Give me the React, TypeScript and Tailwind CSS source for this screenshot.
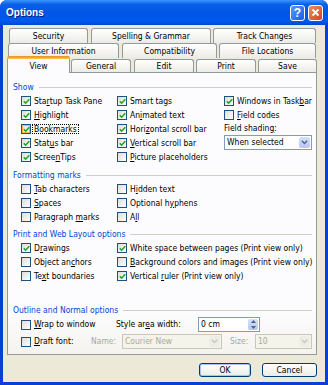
import React from "react";

const font = "font-['DejaVu_Sans_Condensed','Liberation_Sans',sans-serif]";

function L({ t }: { t: string }) {
  const i = t.indexOf("&");
  if (i < 0) return <>{t}</>;
  return (
    <>
      {t.slice(0, i)}
      <u>{t[i + 1]}</u>
      {t.slice(i + 2)}
    </>
  );
}

function Box({ on, hot }: { on?: boolean; hot?: boolean }) {
  return (
    <span className="relative inline-flex h-[10px] w-[10px] shrink-0 items-center justify-center border border-[#1c5180] bg-[linear-gradient(135deg,#dcdcd7,#ffffff)]">
      {hot && <span className="absolute inset-0 border border-[#f8b34a]" />}
      {on && (
        <svg width="7" height="7" viewBox="0 0 7 7" className="relative">
          <path d="M0.8 3.2 L2.6 5.2 L6.3 1.2" fill="none" stroke="#21a121" strokeWidth="1.5" />
        </svg>
      )}
    </span>
  );
}

function Cb({ t, on, hot, focus }: { t: string; on?: boolean; hot?: boolean; focus?: boolean }) {
  return (
    <div className="flex h-[14px] items-center gap-[2px] whitespace-nowrap">
      <Box on={on} hot={hot} />
      <span className={focus ? "px-[1px] outline outline-1 outline-dotted outline-black" : "px-[1px]"}>
        <L t={t} />
      </span>
    </div>
  );
}

function Head({ t }: { t: string }) {
  return (
    <div className="flex h-[14px] items-center gap-[5px] pr-[4px] text-[#0046d5]">
      <span className="whitespace-nowrap">{t}</span>
      <span className="h-px flex-1 bg-[#d0d0bf]" />
    </div>
  );
}

function Chevron({ c }: { c: string }) {
  return (
    <svg width="7" height="5" viewBox="0 0 7 5">
      <path d="M0.8 0.8 L3.5 3.6 L6.2 0.8" fill="none" stroke={c} strokeWidth="1.4" />
    </svg>
  );
}

function Tab({ t, w, active }: { t: string; w: string; active?: boolean }) {
  if (active)
    return (
      <div className={`relative z-10 -mb-px flex h-[17px] flex-col rounded-t-[3px] border border-b-0 border-[#919b9c] bg-[#fcfcfe] ${w}`}>
        <div className="-mx-px -mt-px h-[3px] rounded-t-[3px] bg-[linear-gradient(to_bottom,#e68b2c,#ffc73c)]" />
        <div className="flex flex-1 items-center justify-center">{t}</div>
      </div>
    );
  return (
    <div className={`flex h-full items-center justify-center rounded-t-[3px] border border-b-0 border-[#919b9c] bg-[linear-gradient(to_bottom,#ffffff,#ecebe6)] ${w}`}>
      {t}
    </div>
  );
}

export default function App() {
  return (
    <div className={`flex h-[385px] w-[328px] flex-col overflow-hidden rounded-t-[7px] bg-[#0a3fd6] text-[8.5px] leading-none text-black ${font}`}>
      {/* title bar */}
      <div className="flex h-[25px] shrink-0 items-center bg-[linear-gradient(to_bottom,#3d95ff_0%,#0a5fe8_18%,#0055e6_50%,#0058ee_85%,#0046d0_100%)] pl-[6px] pr-[5px]">
        <span className="flex-1 font-['Liberation_Sans',sans-serif] text-[10px] font-bold text-white [text-shadow:1px_1px_0_#0a1e6e]">
          Options
        </span>
        <div className="flex h-[16px] w-[15px] items-center justify-center rounded-[3px] border border-white bg-[linear-gradient(135deg,#5a9aff,#1a5ae8)] font-['Liberation_Sans',sans-serif] text-[12px] font-bold text-white">
          ?
        </div>
        <div className="ml-[3px] flex h-[16px] w-[15px] items-center justify-center rounded-[3px] border border-white bg-[linear-gradient(135deg,#f28a64,#d2461a)]">
          <svg width="9" height="9" viewBox="0 0 9 9">
            <path d="M1.5 1.5 L7.5 7.5 M7.5 1.5 L1.5 7.5" stroke="#fff" strokeWidth="1.8" />
          </svg>
        </div>
      </div>

      {/* body */}
      <div className="mx-[3px] mb-[3px] flex flex-1 flex-col bg-[#ece9d8] pl-[4px] pr-[8px] pt-[3px]">
        <div className="flex h-[15px] gap-[3px] pl-[2px]">
          <Tab t="Security" w="w-[79px]" />
          <Tab t="Spelling & Grammar" w="w-[120px]" />
          <Tab t="Track Changes" w="w-[103px] -ml-px" />
        </div>
        <div className="flex h-[15px] gap-[3px] pl-[1px]">
          <Tab t="User Information" w="w-[111px]" />
          <Tab t="Compatibility" w="w-[95px]" />
          <Tab t="File Locations" w="w-[97px] -ml-px" />
        </div>
        <div className="-mt-[2px] flex h-[16px] items-end">
          <Tab t="View" w="w-[63px]" active />
          <div className="ml-px flex h-[13px] gap-[2px]">
            <Tab t="General" w="w-[60px]" />
            <Tab t="Edit" w="w-[60px] ml-px" />
            <Tab t="Print" w="w-[60px]" />
            <Tab t="Save" w="w-[59px]" />
          </div>
        </div>

        {/* panel */}
        <div className="flex h-[283px] w-[310px] flex-col border border-[#919b9c] bg-[linear-gradient(to_bottom,#fcfcfe_85%,#f4f3ee)] pl-[5px] pt-[7px]">
          <Head t="Show" />
          <div className="flex pl-[8px]">
            <div className="w-[96px]">
              <Cb t="Sta&rtup Task Pane" on />
              <Cb t="&Highlight" on />
              <Cb t="Boo&kmarks" on hot focus />
              <Cb t="Stat&us bar" on />
              <Cb t="Scree&nTips" on />
            </div>
            <div className="w-[107px]">
              <Cb t="Smart ta&gs" on />
              <Cb t="An&imated text" on />
              <Cb t="Hori&zontal scroll bar" on />
              <Cb t="&Vertical scroll bar" on />
              <Cb t="&Picture placeholders" />
            </div>
            <div className="flex flex-col">
              <Cb t="Windows in Task&bar" on />
              <Cb t="&Field codes" />
              <div className="flex h-[12px] items-center">
                <L t="Field shadin&g:" />
              </div>
              <div className="mt-px flex h-[15px] w-[88px] items-center border border-[#7f9db9] bg-white pl-[2px]">
                <span className="flex-1">When selected</span>
                <span className="m-px flex h-[11px] w-[11px] items-center justify-center rounded-[2px] bg-[linear-gradient(to_bottom,#d4e1fc,#b4c8f6)]">
                  <Chevron c="#4d6185" />
                </span>
              </div>
            </div>
          </div>

          <div className="mt-[4px]">
            <Head t="Formatting marks" />
          </div>
          <div className="flex pl-[8px]">
            <div className="w-[96px]">
              <Cb t="&Tab characters" />
              <Cb t="&Spaces" />
              <Cb t="Paragraph &marks" />
            </div>
            <div>
              <Cb t="H&idden text" />
              <Cb t="Optional h&yphens" />
              <Cb t="A&ll" />
            </div>
          </div>

          <div className="mt-[3px]">
            <Head t="Print and Web Layout options" />
          </div>
          <div className="flex pl-[8px]">
            <div className="w-[96px]">
              <Cb t="D&rawings" on />
              <Cb t="Object an&chors" />
              <Cb t="Te&xt boundaries" />
            </div>
            <div>
              <Cb t="White space between pages (Print view only)" on />
              <Cb t="&Background colors and images (Print view only)" />
              <Cb t="Vertical &ruler (Print view only)" on />
            </div>
          </div>

          <div className="mt-[20px]">
            <Head t="Outline and Normal options" />
          </div>
          <div className="flex h-[15px] items-center pl-[8px]">
            <div className="w-[95px]">
              <Cb t="&Wrap to window" />
            </div>
            <div className="w-[82px] whitespace-nowrap">
              <L t="Style ar&ea width:" />
            </div>
            <div className="flex h-[15px] w-[62px] items-center border border-[#7f9db9] bg-white pl-[2px]">
              <span className="flex-1">0 cm</span>
              <span className="m-px flex h-[11px] w-[10px] flex-col overflow-hidden rounded-[2px] bg-[linear-gradient(to_bottom,#d4e1fc,#b4c8f6)]">
                <span className="flex flex-1 items-center justify-center">
                  <svg width="5" height="3" viewBox="0 0 5 3"><path d="M0 3 L2.5 0 L5 3Z" fill="#4d6185" /></svg>
                </span>
                <span className="flex flex-1 items-center justify-center">
                  <svg width="5" height="3" viewBox="0 0 5 3"><path d="M0 0 L2.5 3 L5 0Z" fill="#4d6185" /></svg>
                </span>
              </span>
            </div>
          </div>
          <div className="mt-[2px] flex h-[15px] items-center pl-[8px]">
            <div className="w-[70px]">
              <Cb t="&Draft font:" />
            </div>
            <div className="w-[31px] text-[#aca899]">Name:</div>
            <div className="flex h-[15px] w-[100px] items-center border border-[#c9c7ba] bg-[#f5f4ea] pl-[2px] text-[#aca899]">
              <span className="flex-1">Courier New</span>
              <span className="m-px flex h-[11px] w-[11px] items-center justify-center rounded-[2px] bg-[#eeede5]">
                <Chevron c="#c9c7ba" />
              </span>
            </div>
            <div className="ml-[8px] w-[25px] text-[#aca899]">Size:</div>
            <div className="flex h-[15px] w-[57px] items-center border border-[#c9c7ba] bg-[#f5f4ea] pl-[2px] text-[#aca899]">
              <span className="flex-1">10</span>
              <span className="m-px flex h-[11px] w-[11px] items-center justify-center rounded-[2px] bg-[#eeede5]">
                <Chevron c="#c9c7ba" />
              </span>
            </div>
          </div>
        </div>

        {/* buttons */}
        <div className="mt-[8px] flex justify-end gap-[11px] pr-[-1px]">
          <button className="flex h-[14px] w-[52px] items-center justify-center rounded-[3px] border border-[#003c74] bg-[linear-gradient(to_bottom,#ffffff,#ecebe6)] shadow-[inset_0_0_0_1px_#a8c4f4]">
            OK
          </button>
          <button className="flex h-[14px] w-[55px] items-center justify-center rounded-[3px] border border-[#003c74] bg-[linear-gradient(to_bottom,#ffffff,#ecebe6)]">
            Cancel
          </button>
        </div>
      </div>
    </div>
  );
}
